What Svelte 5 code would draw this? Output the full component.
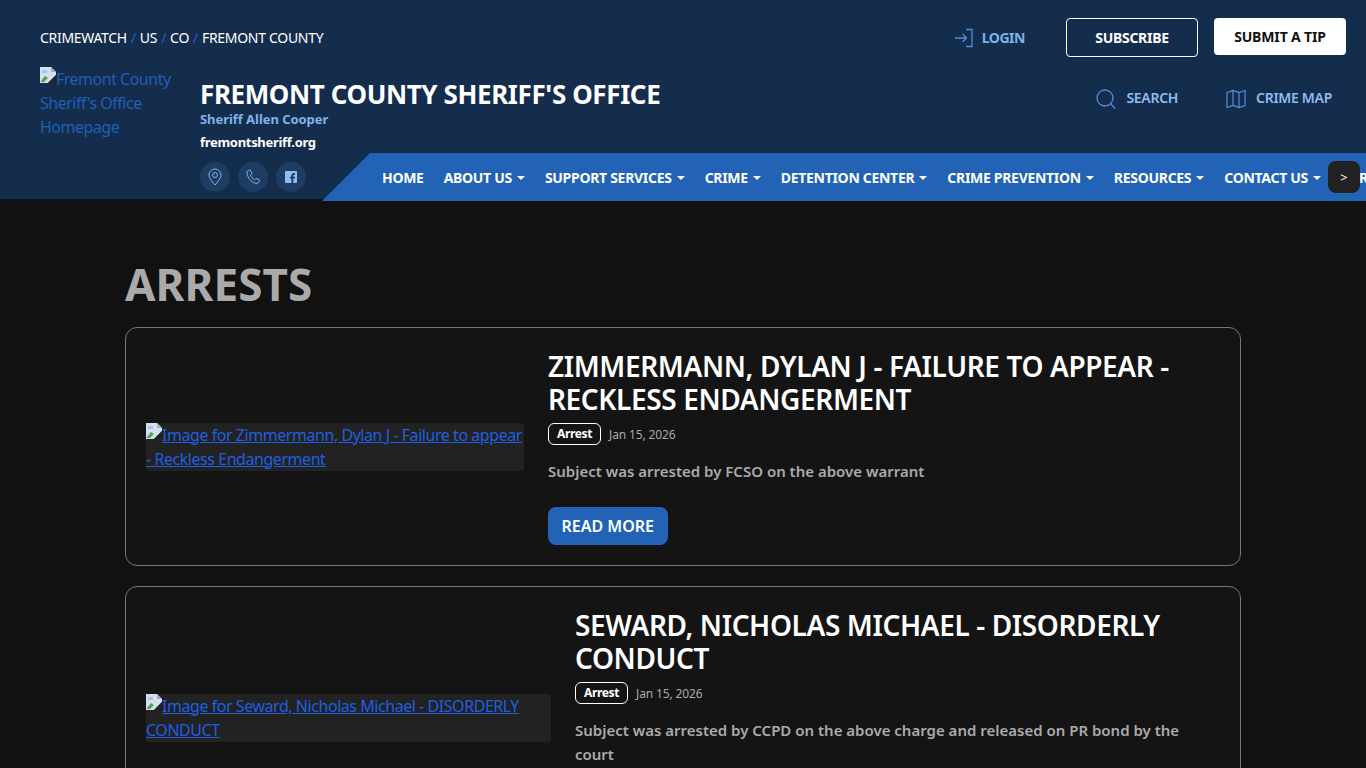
<script>
	const navItems = [
		{ label: 'HOME', caret: false },
		{ label: 'ABOUT US', caret: true },
		{ label: 'SUPPORT SERVICES', caret: true },
		{ label: 'CRIME', caret: true },
		{ label: 'DETENTION CENTER', caret: true },
		{ label: 'CRIME PREVENTION', caret: true },
		{ label: 'RESOURCES', caret: true },
		{ label: 'CONTACT US', caret: true }
	];

	const arrests = [
		{
			title: 'Zimmermann, Dylan J - Failure to appear - Reckless Endangerment',
			alt: 'Image for Zimmermann, Dylan J - Failure to appear - Reckless Endangerment',
			date: 'Jan 15, 2026',
			summary: 'Subject was arrested by FCSO on the above warrant',
			imageWidth: 378
		},
		{
			title: 'Seward, Nicholas Michael - DISORDERLY CONDUCT',
			alt: 'Image for Seward, Nicholas Michael - DISORDERLY CONDUCT',
			date: 'Jan 15, 2026',
			summary: 'Subject was arrested by CCPD on the above charge and released on PR bond by the court',
			imageWidth: 405
		}
	];
</script>

{#snippet brokenImage()}
	<svg class="broken" width="16" height="16" viewBox="0 0 16 16" aria-hidden="true">
		<path d="M0 0h11l5 5v3L8 16H0z" fill="#d5e0ee" />
		<path d="M11 0l5 5h-5z" fill="#9fadbd" />
		<path d="M1 14l4-5 3 2-4 4H1z" fill="#5fa04e" />
		<path d="M16 8v8H8z" fill="#222" opacity="0.9" />
		<path d="M2 3h5v3H2z" fill="#a9c6ea" />
	</svg>
{/snippet}

<header class="site-header">
	<div class="top-row">
		<nav class="crumbs">
			<a href="#a">CRIMEWATCH</a><span>/</span><a href="#a">US</a><span>/</span><a href="#a">CO</a><span>/</span><a href="#a">FREMONT COUNTY</a>
		</nav>
		<div class="top-actions">
			<a class="login" href="#a">
				<svg width="20" height="20" viewBox="0 0 20 20" fill="none" stroke="#4f8fdc" stroke-width="1.3">
					<path d="M1 10h11M8.500 6l4 4-4 4M12 1.500h6v17h-6" />
				</svg>
				LOGIN
			</a>
			<a class="btn-outline" href="#a">SUBSCRIBE</a>
			<a class="btn-white" href="#a">SUBMIT A TIP</a>
		</div>
	</div>

	<div class="brand-row">
		<a class="logo" href="#a">{@render brokenImage()}Fremont County Sheriff's Office Homepage</a>
		<div class="brand-main">
			<div class="title-row">
				<h1>FREMONT COUNTY SHERIFF'S OFFICE</h1>
				<div class="tools">
					<a href="#a">
						<svg width="20" height="20" viewBox="0 0 20 20" fill="none" stroke="#4f8fdc" stroke-width="1.3">
							<circle cx="9" cy="9" r="8" /><path d="M14.700 14.700l4.500 4.800" />
						</svg>
						SEARCH
					</a>
					<a href="#a">
						<svg width="20" height="20" viewBox="0 0 20 20" fill="none" stroke="#4f8fdc" stroke-width="1.2">
							<path d="M1 3.500l6-2 6 2 6-2v15l-6 2-6-2-6 2zM7 1.500v15M13 3.500v15" />
						</svg>
						CRIME MAP
					</a>
				</div>
			</div>
			<div class="sheriff">Sheriff Allen Cooper</div>
			<div class="domain">fremontsheriff.org</div>
			<div class="bottom-row">
				<div class="socials">
					<a href="#a" aria-label="Location">
						<svg width="16" height="18" viewBox="0 0 16 18" fill="none" stroke="#7fb2ea" stroke-width="1">
							<path d="M8 17C4 12.500 2 9.500 2 7a6 6 0 0 1 12 0c0 2.500-2 5.500-6 10z" /><circle cx="8" cy="7" r="2.500" />
						</svg>
					</a>
					<a href="#a" aria-label="Phone">
						<svg width="16" height="16" viewBox="0 0 16 16" fill="none" stroke="#7fb2ea" stroke-width="1">
							<path d="M4.500 1L2 2.500C1.500 6 5 14 12 14.500l2.500-2-.5-2-3-1-1.500 1.500C8 10 6 8 5.500 6L7 4.500 5.500 1.200z" />
						</svg>
					</a>
					<a href="#a" aria-label="Facebook">
						<svg width="12" height="12" viewBox="0 0 12 12">
							<path d="M1 0h10a1 1 0 0 1 1 1v10a1 1 0 0 1-1 1H8.300V7.500h1.500l.2-1.800H8.300V4.600c0-.5.200-.8.900-.8h.9V2.200C9.800 2.100 9.300 2 8.700 2 7.300 2 6.400 2.900 6.400 4.400v1.300H4.900v1.800h1.500V12H1a1 1 0 0 1-1-1V1a1 1 0 0 1 1-1z" fill="#8fbdf0" />
						</svg>
					</a>
				</div>
				<nav class="main-nav">
					{#each navItems as item}
						<a href="#a" class:caret={item.caret}>{item.label}</a>
					{/each}
					<a class="clipped" href="#a">R</a>
					<button class="scroll-btn" type="button">&gt;</button>
				</nav>
			</div>
		</div>
	</div>
</header>

<main class="content">
	<h2>ARRESTS</h2>
	{#each arrests as arrest}
		<article class="card">
			<div class="thumb" style="flex-basis: {arrest.imageWidth}px">
				<a href="#a">{@render brokenImage()}{arrest.alt}</a>
			</div>
			<div class="card-body">
				<h3>{arrest.title}</h3>
				<div class="meta">
					<span class="tag">Arrest</span>
					<span class="date">{arrest.date}</span>
				</div>
				<p>{arrest.summary}</p>
				<a class="read-more" href="#a">READ MORE</a>
			</div>
		</article>
	{/each}
</main>

<style>
	:global(body) {
		background: #111;
		font-family: "Noto Sans", "Open Sans", sans-serif;
		overflow-x: hidden;
	}

	a {
		text-decoration: none;
	}

	.site-header {
		background: #152d4d;
		height: 199px;
		padding: 18px 20px 0 40px;
		box-sizing: border-box;
	}

	.top-row {
		display: flex;
		justify-content: space-between;
		align-items: flex-start;
		height: 49px;
	}

	.crumbs {
		display: flex;
		gap: 4px;
		padding-top: 10px;
		font-size: 14px;
		line-height: 19px;
		letter-spacing: -0.3px;
	}

	.crumbs a {
		color: #fff;
	}

	.crumbs span {
		color: #2263b5;
	}

	.top-actions {
		display: flex;
		align-items: flex-start;
		font-weight: 700;
		font-size: 14px;
	}

	.login {
		display: flex;
		align-items: center;
		gap: 8px;
		height: 39px;
		margin-right: 41px;
		color: #7fb2ea;
		letter-spacing: -0.45px;
	}

	.btn-outline,
	.btn-white {
		display: flex;
		align-items: center;
		justify-content: center;
		box-sizing: border-box;
		border-radius: 4px;
		letter-spacing: -0.3px;
	}

	.btn-outline {
		width: 132px;
		height: 39px;
		margin-right: 16px;
		border: 1px solid #fff;
		color: #fff;
	}

	.btn-white {
		width: 132px;
		height: 37px;
		background: #fff;
		color: #111;
		letter-spacing: -0.15px;
	}

	.brand-row {
		display: flex;
	}

	.logo {
		flex: 0 0 160px;
		box-sizing: border-box;
		padding-right: 20px;
		font-size: 16px;
		line-height: 24px;
		letter-spacing: -0.5px;
		color: #1f5fb8;
	}

	.broken {
		vertical-align: 2px;
	}

	.brand-main {
		flex: 1;
		min-width: 0;
	}

	.title-row {
		display: flex;
		justify-content: space-between;
		align-items: flex-start;
		height: 42px;
		margin-top: 2px;
	}

	h1 {
		margin: 0;
		color: #fff;
		font-size: 26px;
		line-height: 50px;
		font-weight: 700;
		letter-spacing: -0.39px;
	}

	.tools {
		display: flex;
		gap: 48px;
		padding-right: 14px;
		margin-top: 17px;
	}

	.tools a {
		display: flex;
		align-items: center;
		gap: 10px;
		color: #8fbdf0;
		font-size: 14px;
		font-weight: 600;
		letter-spacing: -0.3px;
	}

	.tools svg {
		margin-top: 3px;
	}

	.sheriff {
		margin-top: -1px;
		color: #7fb2ea;
		font-size: 13px;
		line-height: 18px;
		font-weight: 700;
		letter-spacing: -0.05px;
	}

	.domain {
		margin-top: 5px;
		color: #fff;
		font-size: 13px;
		line-height: 18px;
		font-weight: 700;
		letter-spacing: -0.3px;
	}

	.bottom-row {
		display: flex;
		margin-top: 2px;
		margin-right: -20px;
	}

	.socials {
		display: flex;
		gap: 8px;
		padding-top: 9px;
		flex: 0 0 122px;
	}

	.socials a {
		display: flex;
		align-items: center;
		justify-content: center;
		width: 30px;
		height: 30px;
		border-radius: 50%;
		background: #1f3d63;
	}

	.main-nav {
		position: relative;
		flex: 1;
		min-width: 0;
		display: flex;
		align-items: center;
		gap: 20px;
		height: 48px;
		padding-left: 60px;
		background: #2263b5;
		clip-path: polygon(48px 0, 100% 0, 100% 100%, 0 100%);
		overflow: hidden;
		white-space: nowrap;
		box-sizing: border-box;
	}

	.main-nav a {
		color: #fff;
		font-size: 14px;
		font-weight: 700;
		letter-spacing: -0.3px;
	}

	.main-nav a.caret::after {
		content: "";
		display: inline-block;
		margin-left: 5px;
		vertical-align: 3px;
		border-top: 4px solid #fff;
		border-left: 4px solid transparent;
		border-right: 4px solid transparent;
	}

	.main-nav a.clipped {
		margin-left: 18px;
	}

	.scroll-btn {
		position: absolute;
		left: 1006px;
		top: 8px;
		width: 32px;
		height: 32px;
		padding: 0;
		border: 0;
		border-radius: 8px;
		background: #222;
		color: #fff;
		font-family: inherit;
		font-size: 13px;
	}

	.content {
		width: 1116px;
		margin: 0 auto;
		padding-top: 55px;
	}

	h2 {
		margin: 0 0 13px;
		color: #aaa;
		font-size: 44px;
		line-height: 60px;
		font-weight: 700;
		letter-spacing: 0.1px;
	}

	.card {
		display: flex;
		align-items: center;
		gap: 24px;
		padding: 20px;
		margin-bottom: 20px;
		border: 1px solid #777;
		border-radius: 12px;
		background: #141414;
	}

	.thumb {
		flex: 0 0 auto;
		background: #222;
		border-radius: 3px;
		font-size: 16px;
		line-height: 24px;
		letter-spacing: -0.45px;
	}

	.thumb a {
		color: #1f5fe0;
		text-decoration: underline;
	}

	.card-body {
		flex: 1;
		min-width: 0;
	}

	h3 {
		margin: 0;
		padding-top: 2px;
		color: #fff;
		font-size: 28px;
		line-height: 33px;
		font-weight: 600;
		text-transform: uppercase;
		letter-spacing: -0.38px;
	}

	.meta {
		display: flex;
		align-items: center;
		gap: 8px;
		margin-top: 7px;
	}

	.tag {
		box-sizing: border-box;
		height: 22px;
		padding: 0 8px;
		border: 1px solid #fff;
		border-radius: 6px;
		color: #fff;
		font-size: 12px;
		line-height: 20px;
		font-weight: 700;
		letter-spacing: -0.35px;
	}

	.date {
		color: #aaa;
		font-size: 12px;
		letter-spacing: -0.15px;
	}

	p {
		margin: 14px 0 24px;
		padding-right: 30px;
		color: #aaa;
		font-size: 15px;
		line-height: 24px;
		font-weight: 600;
	}

	.read-more {
		display: inline-block;
		padding: 0 13.500px;
		border-radius: 8px;
		background: #2263b5;
		color: #fff;
		font-size: 16px;
		line-height: 38px;
		font-weight: 600;
	}
</style>
